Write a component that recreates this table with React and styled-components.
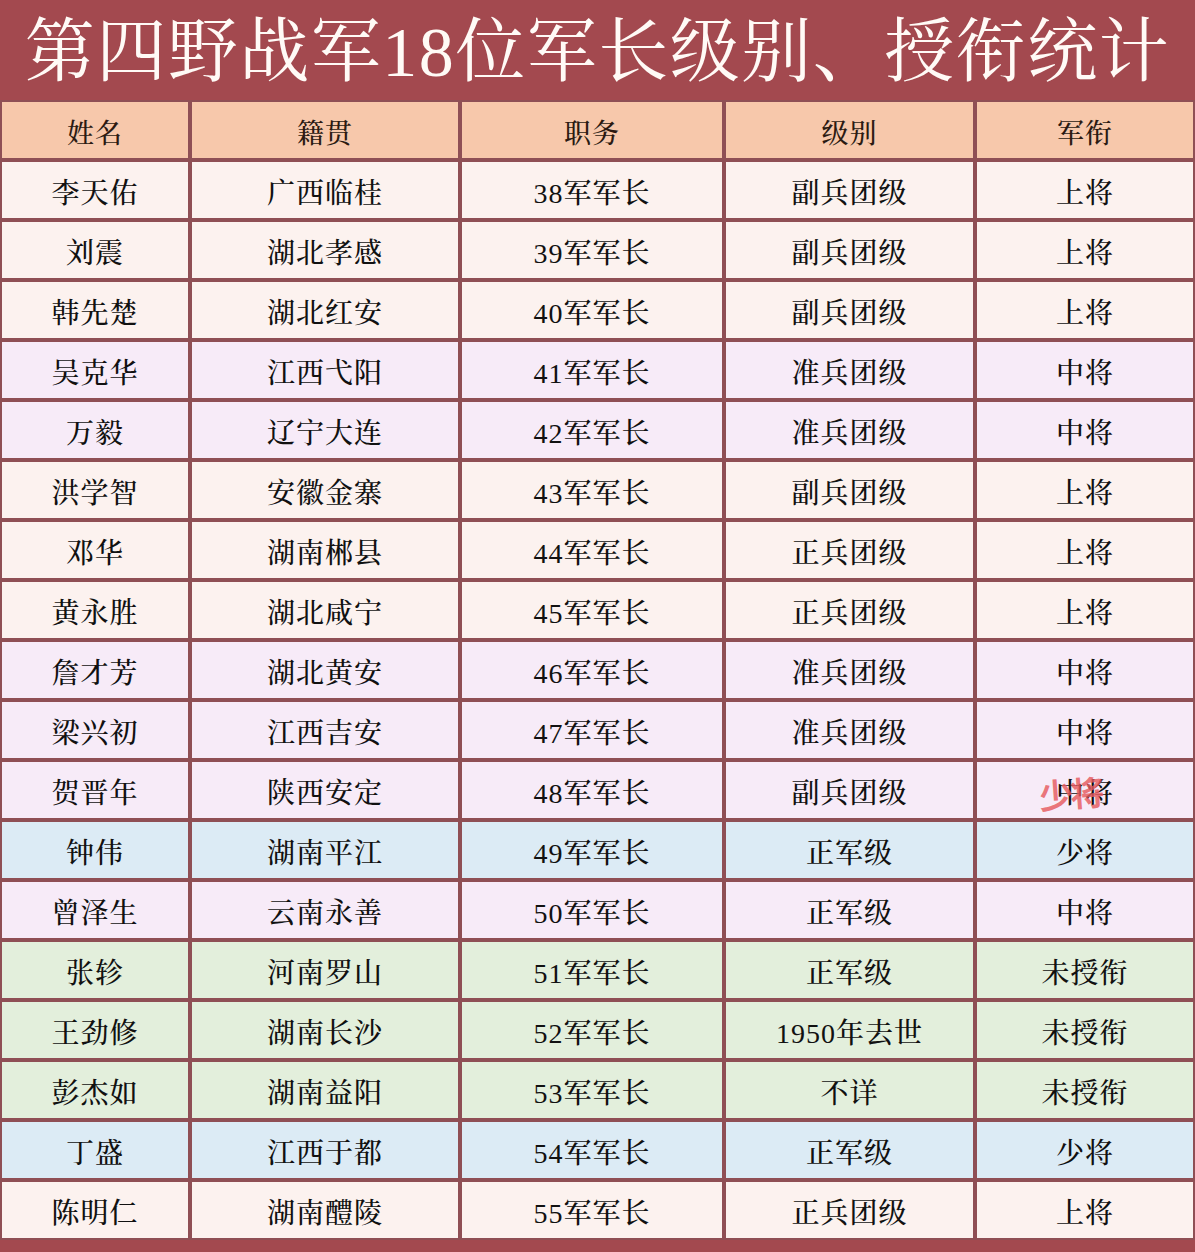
import React from 'react';
import styled, { createGlobalStyle } from 'styled-components';

const GlobalStyle = createGlobalStyle`
  html, body {
    margin: 0;
    padding: 0;
    background: #a3494f;
  }
`;

const serif = `"Liberation Serif", "Noto Serif CJK SC", "Noto Sans CJK SC", serif`;

// 行底色：按军衔分组
const tones = {
  up: '#fcf2ef',
  mid: '#f7ebf8',
  low: '#dcebf5',
  none: '#e3efdc',
};

const rows = [
  ['李天佑', '广西临桂', '38军军长', '副兵团级', '上将', 'up'],
  ['刘震', '湖北孝感', '39军军长', '副兵团级', '上将', 'up'],
  ['韩先楚', '湖北红安', '40军军长', '副兵团级', '上将', 'up'],
  ['吴克华', '江西弋阳', '41军军长', '准兵团级', '中将', 'mid'],
  ['万毅', '辽宁大连', '42军军长', '准兵团级', '中将', 'mid'],
  ['洪学智', '安徽金寨', '43军军长', '副兵团级', '上将', 'up'],
  ['邓华', '湖南郴县', '44军军长', '正兵团级', '上将', 'up'],
  ['黄永胜', '湖北咸宁', '45军军长', '正兵团级', '上将', 'up'],
  ['詹才芳', '湖北黄安', '46军军长', '准兵团级', '中将', 'mid'],
  ['梁兴初', '江西吉安', '47军军长', '准兵团级', '中将', 'mid'],
  ['贺晋年', '陕西安定', '48军军长', '副兵团级', '中将', 'mid', '少将'],
  ['钟伟', '湖南平江', '49军军长', '正军级', '少将', 'low'],
  ['曾泽生', '云南永善', '50军军长', '正军级', '中将', 'mid'],
  ['张轸', '河南罗山', '51军军长', '正军级', '未授衔', 'none'],
  ['王劲修', '湖南长沙', '52军军长', '1950年去世', '未授衔', 'none'],
  ['彭杰如', '湖南益阳', '53军军长', '不详', '未授衔', 'none'],
  ['丁盛', '江西于都', '54军军长', '正军级', '少将', 'low'],
  ['陈明仁', '湖南醴陵', '55军军长', '正兵团级', '上将', 'up'],
];

const headers = ['姓名', '籍贯', '职务', '级别', '军衔'];

const Page = styled.div`
  width: 1195px;
  height: 1252px;
  background: #a3494f;
  display: flex;
  flex-direction: column;
`;

const Title = styled.h1`
  margin: 0;
  height: 100px;
  display: flex;
  align-items: center;
  justify-content: center;
  color: #fffaf6;
  font-family: ${serif};
  font-weight: 400;
  font-size: 70px;
  letter-spacing: 1.5px;
  line-height: 1;
  padding-top: 6px;
  box-sizing: border-box;
`;

const Table = styled.div`
  display: grid;
  grid-template-columns: 186px 266px 260px 247px 216px;
  grid-auto-rows: 56px;
  gap: 4px;
  padding: 2px 2px;
  background: #8f4f55;
`;

const Cell = styled.div`
  position: relative;
  display: flex;
  align-items: center;
  justify-content: center;
  background: ${(p) => p.$bg};
  color: ${(p) => (p.$head ? '#2b1a12' : '#111')};
  font-family: ${serif};
  font-weight: 500;
  font-size: ${(p) => (p.$head ? '27px' : '28px')};
  letter-spacing: 1px;
  padding-top: 2px;
  box-sizing: border-box;
`;

const Stamp = styled.span`
  position: absolute;
  left: 62px;
  top: 6px;
  color: rgba(230, 90, 95, 0.82);
  font-family: "Noto Sans CJK SC", sans-serif;
  font-weight: 700;
  font-size: 34px;
  letter-spacing: -3px;
  transform: rotate(-4deg);
  pointer-events: none;
`;

export default function App() {
  return (
    <Page>
      <GlobalStyle />
      <Title>第四野战军18位军长级别、授衔统计</Title>
      <Table>
        {headers.map((h) => (
          <Cell key={h} $head $bg="#f7c8ab">
            {h}
          </Cell>
        ))}
        {rows.map((r) =>
          r.slice(0, 5).map((v, i) => (
            <Cell key={r[0] + i} $bg={tones[r[5]]}>
              {v}
              {i === 4 && r[6] && <Stamp>{r[6]}</Stamp>}
            </Cell>
          ))
        )}
      </Table>
    </Page>
  );
}
